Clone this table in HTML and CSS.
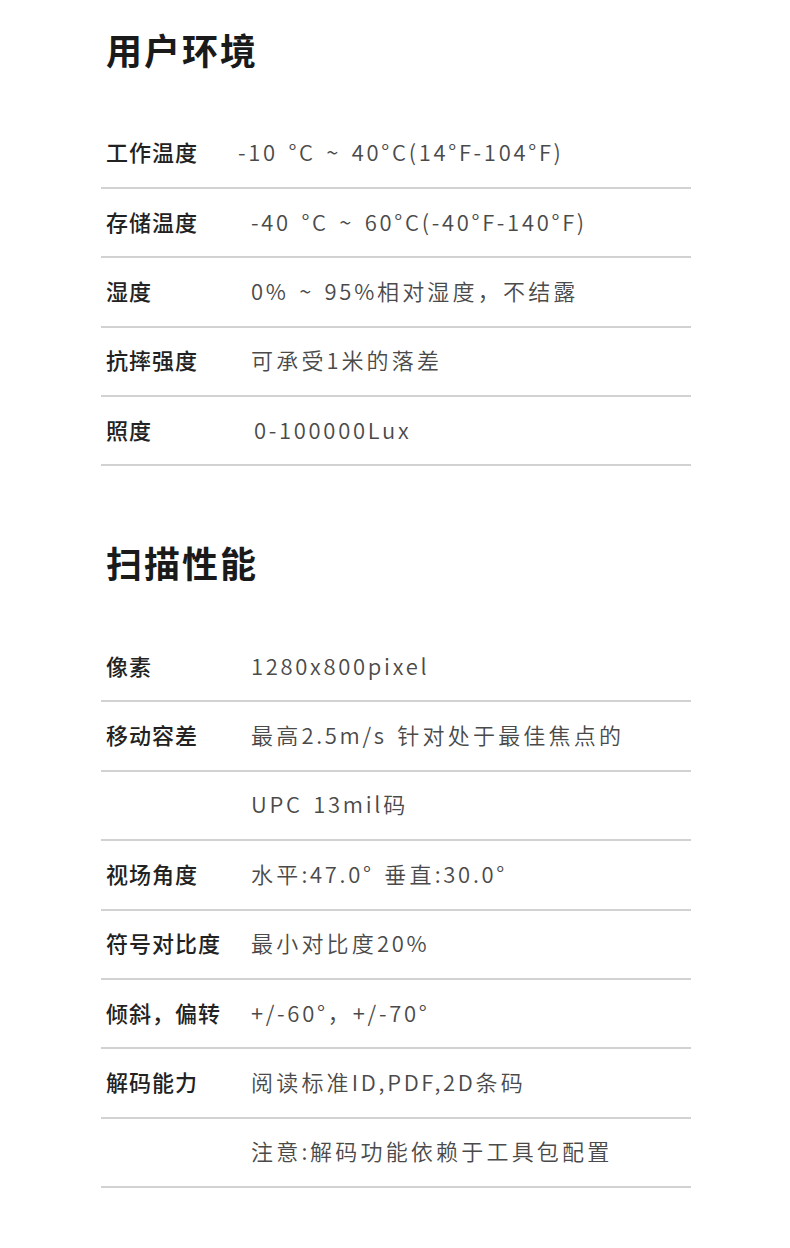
FILE: index.html
```html
<!DOCTYPE html>
<html lang="zh-CN">
<head>
<meta charset="utf-8">
<title>规格</title>
<link rel="stylesheet" href="styles.css">
</head>
<body>
<main class="page">
  <section class="spec spec-first">
    <h2 class="spec-title">用户环境</h2>
    <div class="spec-row"><div class="spec-label">工作温度</div><div class="spec-value spec-value-shift">-10 °C ~ 40°C(14°F-104°F)</div></div>
    <div class="spec-row"><div class="spec-label">存储温度</div><div class="spec-value">-40 °C ~ 60°C(-40°F-140°F)</div></div>
    <div class="spec-row"><div class="spec-label">湿度</div><div class="spec-value">0% ~ 95%<span class="cn">相对湿度，不结露</span></div></div>
    <div class="spec-row"><div class="spec-label">抗摔强度</div><div class="spec-value"><span class="cn">可承受</span>1<span class="cn">米的落差</span></div></div>
    <div class="spec-row"><div class="spec-label">照度</div><div class="spec-value spec-value-nudge">0-100000Lux</div></div>
  </section>
  <section class="spec spec-second">
    <h2 class="spec-title">扫描性能</h2>
    <div class="spec-row"><div class="spec-label">像素</div><div class="spec-value">1280x800pixel</div></div>
    <div class="spec-row"><div class="spec-label">移动容差</div><div class="spec-value"><span class="cn">最高</span>2.5m/s <span class="cn">针对处于最佳焦点的</span></div></div>
    <div class="spec-row"><div class="spec-label"></div><div class="spec-value">UPC 13mil<span class="cn">码</span></div></div>
    <div class="spec-row"><div class="spec-label">视场角度</div><div class="spec-value"><span class="cn">水平</span>:47.0° <span class="cn">垂直</span>:30.0°</div></div>
    <div class="spec-row"><div class="spec-label">符号对比度</div><div class="spec-value"><span class="cn">最小对比度</span>20%</div></div>
    <div class="spec-row"><div class="spec-label">倾斜，偏转</div><div class="spec-value">+/-60°<span class="cn">，</span>+/-70°</div></div>
    <div class="spec-row"><div class="spec-label">解码能力</div><div class="spec-value"><span class="cn">阅读标准</span>ID,PDF,2D<span class="cn">条码</span></div></div>
    <div class="spec-row"><div class="spec-label"></div><div class="spec-value"><span class="cn">注意</span>:<span class="cn">解码功能依赖于工具包配置</span></div></div>
  </section>
</main>
</body>
</html>
```

FILE: styles.css
```css
html, body {
  margin: 0;
  padding: 0;
  background: #ffffff;
}

body {
  font-family: "Noto Sans CJK SC", "Noto Sans", sans-serif;
  color: #222222;
}

.page {
  width: 590px;
  margin-left: 101px;
  display: flex;
  flex-direction: column;
}

.spec {
  display: flex;
  flex-direction: column;
}

.spec-first {
  padding-top: 27px;
}

.spec-second {
  padding-top: 74px;
}

.spec-title {
  margin: 0 0 48.5px 5px;
  font-size: 36px;
  line-height: 44px;
  font-weight: 700;
  letter-spacing: 2px;
  color: #1a1a1a;
}

.spec-row {
  display: flex;
  align-items: center;
  height: 67.4px;
  padding-bottom: 0;
  border-bottom: 2px solid #d2d2d2;
  box-sizing: content-box;
}

.spec-label,
.spec-value {
  position: relative;
  top: -2px;
}

.spec-label {
  width: 145px;
  padding-left: 5px;
  flex: none;
  font-size: 22px;
  font-weight: 500;
  letter-spacing: 1px;
  color: #222222;
}

.spec-value {
  font-size: 22px;
  font-weight: 350;
  letter-spacing: 2.7px;
  word-spacing: 3px;
  color: #4a4a4a;
}

.spec-value .cn {
  letter-spacing: 3.2px;
  word-spacing: 0;
}

.spec-value-shift {
  margin-left: -13px;
}

.spec-value-nudge {
  margin-left: 3px;
}
```
